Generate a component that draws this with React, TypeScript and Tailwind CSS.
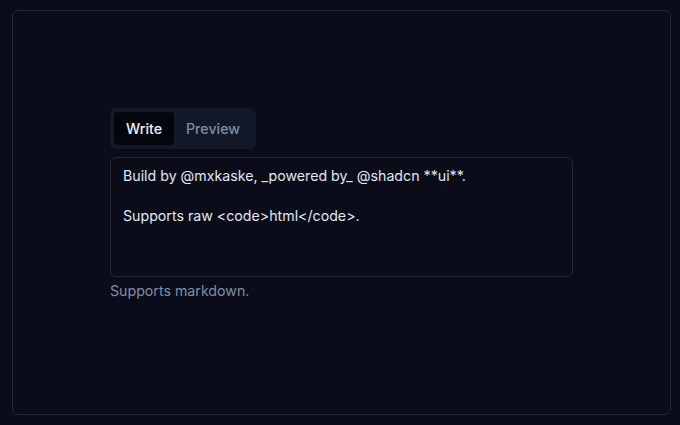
import React from 'react';

const App: React.FC = () => {
  return (
    <div
      className="w-[680px] h-[425px] bg-[#0a0d19] pt-[10px] pb-[10px] pl-[12px] pr-[9px]"
      style={{ fontFamily: 'Inter, "Noto Sans", sans-serif' }}
    >
      <div className="h-full rounded-md border border-[#1f2738] flex items-center justify-center">
        <div className="w-[463px] -mt-[16px]">
          <div className="inline-flex h-[41px] items-center rounded-md bg-[#121828] p-1 text-[#7f8ea3]">
            <button className="h-[33px] rounded-sm bg-[#04060e] px-3 text-[14.2px] font-medium text-[#eef1f5]">
              Write
            </button>
            <button className="h-[33px] rounded-sm px-3 text-[14.2px] font-medium">Preview</button>
          </div>
          <div className="mt-2 h-[120px] rounded-md border border-[#1f2738] px-3 py-2 text-[14.2px] leading-5 text-[#e1e7ef] whitespace-pre-wrap">
            {'Build by @mxkaske, _powered by_ @shadcn **ui**.\n\nSupports raw <code>html</code>.'}
          </div>
          <p className="mt-[4px] text-[14.2px] leading-5 text-[#7f8ea3]">Supports markdown.</p>
        </div>
      </div>
    </div>
  );
};

export default App;
